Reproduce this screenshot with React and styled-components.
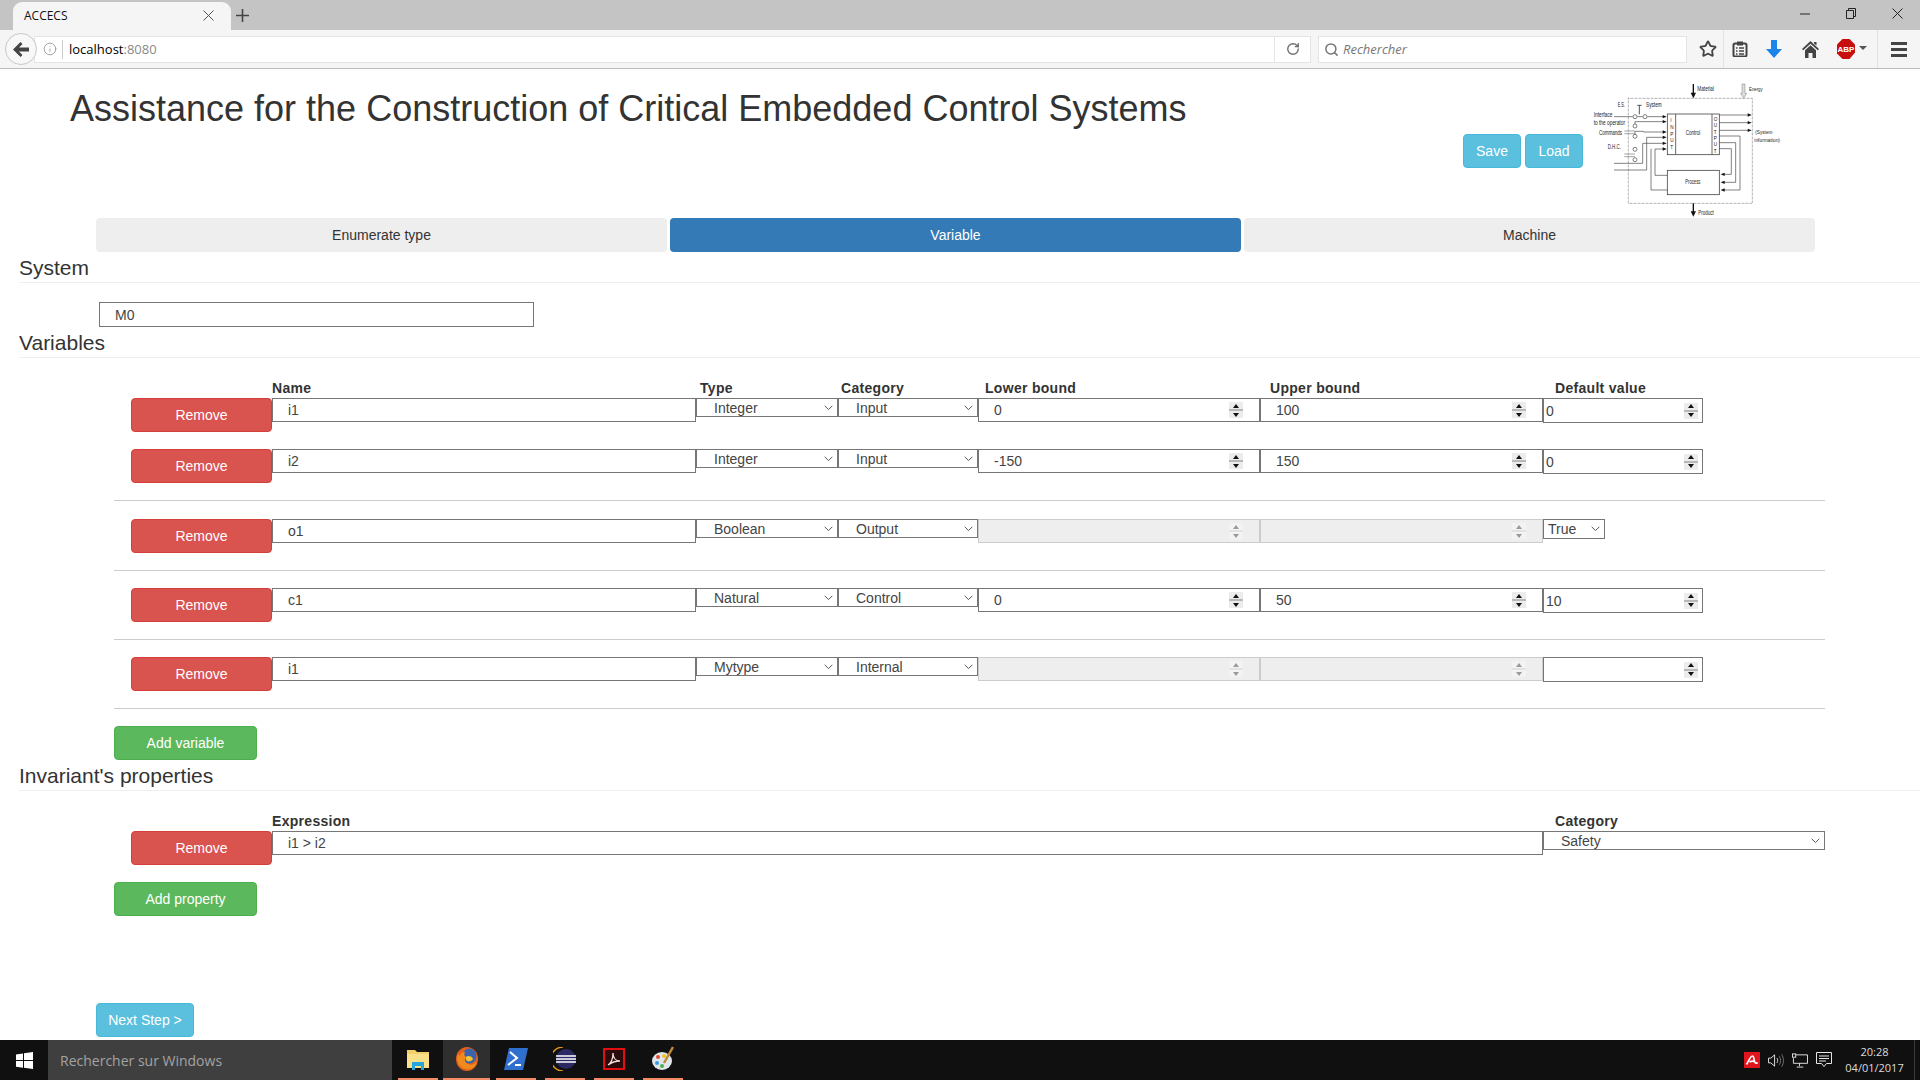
import React from 'react';
import styled, { createGlobalStyle } from 'styled-components';
import { Star, Info, RotateCw, Search } from 'lucide-react';

const GlobalStyle = createGlobalStyle`
  html, body {
    margin: 0;
    height: 100%;
    background: #fff;
  }
  body {
    font-family: "Liberation Sans", Arial, sans-serif;
    font-size: 14px;
    color: #333;
  }
  * {
    box-sizing: border-box;
  }
`;

const Screen = styled.div`
  display: grid;
  grid-template-rows: 69px 971px 40px;
  width: 1920px;
  height: 1080px;
  overflow: hidden;
`;

/* browser chrome */
const BrowserChrome = styled.header`
  font-family: "Open Sans", "Noto Sans", sans-serif;
  border-bottom: 1px solid #bcbcbc;
  background: #f5f5f5;
`;

const TabStrip = styled.div`
  display: flex;
  align-items: flex-end;
  height: 30px;
  background: #c4c4c4;
`;

const BrowserTab = styled.div`
  display: flex;
  align-items: center;
  justify-content: space-between;
  width: 218px;
  height: 28px;
  margin-left: 13px;
  padding: 0 17px 2px 11px;
  border-radius: 9px 9px 0 0;
  background: #f5f5f5;
  font-size: 12px;
  color: #111;
`;

const NewTab = styled.div`
  display: flex;
  align-items: center;
  justify-content: center;
  width: 22px;
  height: 28px;
  padding-bottom: 2px;
`;

const WindowControls = styled.div`
  display: flex;
  align-self: stretch;
  margin-left: auto;
`;

const WindowButton = styled.div`
  display: flex;
  align-items: center;
  justify-content: center;
  width: 46px;
  padding-bottom: 3px;
`;

const Toolbar = styled.div`
  display: flex;
  align-items: center;
  height: 38px;
`;

const BackButton = styled.div`
  display: flex;
  align-items: center;
  justify-content: center;
  flex: none;
  width: 32px;
  height: 32px;
  margin-left: 5px;
  border: 1px solid #c8c8c8;
  border-radius: 50%;
  background: #f8f8f8;
  position: relative;
  z-index: 1;
`;

const UrlBar = styled.div`
  display: flex;
  align-items: center;
  width: 1277px;
  height: 27px;
  margin-left: -3px;
  padding-left: 3px;
  border: 1px solid #e4e4e4;
  background: #fff;
  font-size: 13px;
  color: #000;

  span {
    color: #8a8a8a;
  }
`;

const UrlInfo = styled.div`
  display: flex;
  align-items: center;
  height: 19px;
  margin-right: 6px;
  padding: 0 5px;
  border-right: 1px solid #ccc;
  color: #8a8a8a;
`;

const UrlReload = styled.div`
  display: flex;
  align-items: center;
  justify-content: center;
  width: 36px;
  height: 100%;
  margin-left: auto;
  border-left: 1px solid #e4e4e4;
  color: #6f6f6f;
`;

const SearchBar = styled.div`
  display: flex;
  align-items: center;
  gap: 4px;
  width: 369px;
  height: 27px;
  margin-left: 7px;
  padding-left: 5px;
  border: 1px solid #e4e4e4;
  background: #fff;
  font-size: 13px;
  font-style: italic;
  color: #777;
`;

const ToolSlot = styled.div`
  display: flex;
  align-items: center;
  justify-content: center;
  flex: none;
  width: ${({ $w }) => $w}px;
  height: ${({ $divider }) => ($divider ? '38px' : 'auto')};
  padding-left: ${({ $shift }) => $shift || 0}px;
  border-left: ${({ $divider }) => ($divider ? '1px solid #e2e2e2' : '0')};
  color: #444;
`;

/* page */
const Main = styled.main`
  display: flex;
  flex-direction: column;
`;

const PageHeader = styled.div`
  display: flex;
  align-items: flex-start;
  height: 149px;
  padding-right: 133px;
`;

const Title = styled.h1`
  margin: 20px 0 0 70px;
  font-size: 36px;
  font-weight: 400;
  line-height: 40px;
  color: #333;
`;

const Actions = styled.div`
  display: flex;
  gap: 4px;
  margin: 65px 7px 0 auto;
`;

const DiagramWrap = styled.div`
  flex: none;
  width: 197px;
  height: 136px;
  margin-top: 13px;
`;

const Button = styled.button`
  display: block;
  width: ${({ $w }) => $w}px;
  height: 34px;
  padding: 0;
  border: 1px solid ${({ $kind }) => ({ info: '#46b8da', danger: '#d43f3a', success: '#4cae4c' }[$kind])};
  border-radius: 4px;
  background: ${({ $kind }) => ({ info: '#5bc0de', danger: '#d9534f', success: '#5cb85c' }[$kind])};
  color: #fff;
  font: 14px "Liberation Sans", Arial, sans-serif;
`;

const StepTabs = styled.nav`
  display: grid;
  grid-template-columns: repeat(3, 571px);
  gap: 3px;
  margin-left: 96px;
`;

const StepTab = styled.div`
  display: flex;
  align-items: center;
  justify-content: center;
  height: 34px;
  border-radius: 4px;
  background: ${({ $active }) => ($active ? '#337ab7' : '#eee')};
  color: ${({ $active }) => ($active ? '#fff' : '#333')};
`;

const SectionTitle = styled.h3`
  margin: 0 0 0 19px;
  padding-top: 4px;
  height: 31px;
  border-bottom: 1px solid #eee;
  font-size: 21px;
  font-weight: 400;
  line-height: 24px;
  color: #333;
`;

const Field = styled.div`
  display: flex;
  align-items: center;
  justify-content: space-between;
  width: ${({ $w }) => ($w ? `${$w}px` : 'auto')};
  height: ${({ $h }) => $h || 24}px;
  padding-left: ${({ $pad }) => $pad ?? 15}px;
  padding-right: ${({ $right }) => $right ?? 16}px;
  border: 1px solid ${({ $disabled }) => ($disabled ? '#ccc' : '#767676')};
  background: ${({ $disabled }) => ($disabled ? '#eee' : '#fff')};
  color: #444;
`;

const SystemField = styled(Field)`
  margin: 19px 0 0 99px;
  height: 25px;
`;

const FormBlock = styled.div`
  margin-left: 114px;
  width: 1711px;
`;

const HeaderRow = styled.div`
  display: grid;
  grid-template-columns: ${({ $cols }) => $cols};
  height: 20px;
  margin-top: 20px;
  padding-left: 158px;
  font-weight: 700;
  letter-spacing: 0.3px;
  line-height: 20px;
  color: #333;
`;

const RowGroup = styled.div`
  display: flex;
  flex-direction: column;
  gap: 17px;
  padding: ${({ $top }) => $top}px 0 17px;
  border-bottom: 1px solid #ccc;
`;

const Row = styled.div`
  display: grid;
  grid-template-columns: ${({ $cols }) => $cols};
  align-items: start;
  padding-left: 17px;
`;

const SelectBox = styled.div`
  display: flex;
  align-items: center;
  justify-content: space-between;
  width: ${({ $w }) => ($w ? `${$w}px` : 'auto')};
  height: ${({ $h }) => $h || 19}px;
  padding: 0 4px 0 ${({ $pad }) => $pad ?? 17}px;
  border: 1px solid #767676;
  background: #fff;
  color: #444;
  line-height: 14px;
`;

const SpinBox = styled.div`
  display: flex;
  flex-direction: column;
  justify-content: space-between;
  flex: none;
  width: 14px;
  height: 16px;
  background: ${({ $off }) => ($off ? '#e2e2e2' : '#b8b8b8')};
`;

const SpinPart = styled.div`
  display: flex;
  align-items: center;
  justify-content: center;
  height: 7px;
  background: ${({ $off }) => ($off ? '#f3f3f3' : '#ececec')};

  &::after {
    content: '';
    border-left: 3px solid transparent;
    border-right: 3px solid transparent;
    border-${({ $down }) => ($down ? 'top' : 'bottom')}: 4px solid ${({ $off }) => ($off ? '#9a9a9a' : '#111')};
  }
`;

const AddBlock = styled.div`
  margin-top: ${({ $top }) => $top}px;
`;

const NextStep = styled.div`
  margin: 87px 0 0 96px;
`;

/* taskbar */
const Taskbar = styled.footer`
  display: flex;
  align-items: stretch;
  background: #101010;
  font-family: "Open Sans", "Noto Sans", sans-serif;
`;

const StartButton = styled.div`
  display: flex;
  align-items: center;
  justify-content: center;
  width: 48px;
`;

const TaskSearch = styled.div`
  display: flex;
  align-items: center;
  width: 344px;
  padding-left: 12px;
  background: #3f3f3f;
  color: #a3a3a3;
  font-size: 14px;
`;

const TaskList = styled.div`
  display: flex;
  gap: 9px;
  padding-left: 6px;
`;

const TaskSlot = styled.div`
  display: flex;
  align-items: center;
  justify-content: center;
  width: ${({ $active }) => ($active ? 47 : 40)}px;
  margin: ${({ $active }) => ($active ? '0 -3px 0 -4px' : 0)};
  border-bottom: 2px solid #f58b66;
  background: ${({ $active }) => ($active ? '#2f2f2f' : 'transparent')};
`;

const Tray = styled.div`
  display: flex;
  align-items: center;
  gap: 8px;
  margin-left: auto;
  padding-right: 5px;
`;

const TrayIcon = styled.div`
  display: flex;
  justify-content: center;
  width: 16px;
`;

const Clock = styled.div`
  display: flex;
  flex-direction: column;
  justify-content: center;
  width: 80px;
  height: 40px;
  margin-left: -5px;
  border-right: 1px solid #3a3a3a;
  color: #ddd;
  font-size: 11px;
  line-height: 16px;
  text-align: center;
`;

const Spinner = ({ off }) => (
  <SpinBox $off={off}>
    <SpinPart $off={off} />
    <SpinPart $off={off} $down />
  </SpinBox>
);

const Chevron = () => (
  <svg width="9" height="6" viewBox="0 0 9 6" fill="none" stroke="#555" strokeWidth="1">
    <path d="M.7.8l3.8 3.8L8.3.8" />
  </svg>
);

const Select = ({ value, ...rest }) => (
  <SelectBox {...rest}>
    <span>{value}</span>
    <Chevron />
  </SelectBox>
);

const Arrow = ({ d, head }) => (
  <>
    <path d={d} fill="none" stroke="#444" strokeWidth="2" />
    <path d={head} fill="#111" />
  </>
);

const rightHead = (x, y) => `M${x} ${y}l-12 -5v10z`;
const leftHead = (x, y) => `M${x} ${y}l12 -5v10z`;

const DiagramLabel = ({ x, y, w, children, size = 21 }) => (
  <text
    x={x}
    y={y + 1}
    textLength={w}
    lengthAdjust="spacingAndGlyphs"
    fontSize={size}
    fontFamily="Liberation Sans, sans-serif"
    fill="#222">
    {children}
  </text>
);

const Diagram = () => (
  <svg width="197" height="136" viewBox="90 36 591 408">
    <rect x="205" y="85" width="372" height="315" fill="none" stroke="#555" strokeWidth="2" strokeDasharray="2 2" />
    <path d="M400 42v30" stroke="#111" strokeWidth="4" />
    <path d="M392 68h16l-8 17z" fill="#111" />
    <DiagramLabel x={412} y={62} w={50}>Material</DiagramLabel>
    <path d="M546 42h9v28h5l-9 15-9-15h4z" fill="#ddd" stroke="#777" strokeWidth="1.4" />
    <DiagramLabel x={567} y={63} w={41} size={18}>Energy</DiagramLabel>
    <DiagramLabel x={173} y={111} w={22}>E.S.</DiagramLabel>
    <DiagramLabel x={258} y={110} w={47}>System</DiagramLabel>
    <DiagramLabel x={101} y={139} w={56}>Interface</DiagramLabel>
    <DiagramLabel x={101} y={164} w={94}>to the operator</DiagramLabel>
    <DiagramLabel x={117} y={194} w={69}>Commands</DiagramLabel>
    <DiagramLabel x={143} y={235} w={40}>D.H.C.</DiagramLabel>

    <rect x="322" y="132" width="156" height="122" fill="#fff" stroke="#444" strokeWidth="2.4" />
    <path d="M347 132v122M456 132v122" stroke="#444" strokeWidth="2.4" />
    <DiagramLabel x={377} y={195} w={44}>Control</DiagramLabel>
    {['I', 'N', 'P', 'U', 'T'].map((c, i) => (
      <DiagramLabel key={`in${i}`} x={331} y={156 + i * 20} size={14}>{c}</DiagramLabel>
    ))}
    {['O', 'U', 'T', 'P', 'U', 'T'].map((c, i) => (
      <DiagramLabel key={`out${i}`} x={461} y={152 + i * 19} size={14}>{c}</DiagramLabel>
    ))}
    <rect x="322" y="301" width="156" height="73" fill="#fff" stroke="#444" strokeWidth="2.4" />
    <DiagramLabel x={376} y={342} w={45}>Process</DiagramLabel>

    <path d="M238 105v28M232 106h13" stroke="#555" strokeWidth="3" fill="none" />
    <path d="M193 183h32M193 191h32M193 252h32M193 260h32" stroke="#777" strokeWidth="2" />
    <path d="M162 140h56M232 140h16" stroke="#444" strokeWidth="2" />
    {[[225, 140], [255, 140], [225, 168], [225, 199], [225, 238], [225, 269]].map(([cx, cy]) => (
      <circle key={`${cx}-${cy}`} cx={cx} cy={cy} r="6" fill="#fff" stroke="#444" strokeWidth="2" />
    ))}

    <Arrow d="M262 140h48" head={rightHead(320, 140)} />
    <Arrow d="M225 162v-7h85" head={rightHead(320, 155)} />
    <Arrow d="M225 193v-9h25v2h60" head={rightHead(320, 186)} />
    <Arrow d="M162 300h98v-98h50" head={rightHead(320, 202)} />
    <Arrow d="M162 280h86v-60h62" head={rightHead(320, 220)} />
    <Arrow d="M322 316h-37v-79h25" head={rightHead(320, 237)} />
    <path d="M322 360h-49v-124" fill="none" stroke="#444" strokeWidth="2" />

    <Arrow d="M478 135h87" head={rightHead(575, 135)} />
    <Arrow d="M478 158h87" head={rightHead(575, 158)} />
    <Arrow d="M478 181h87" head={rightHead(575, 181)} />
    <DiagramLabel x={586} y={191} w={51} size={18}>(System</DiagramLabel>
    <DiagramLabel x={583} y={216} w={77} size={18}>information)</DiagramLabel>

    <Arrow d="M478 198h62v162h-48" head={leftHead(482, 360)} />
    <Arrow d="M478 218h49v119h-35" head={leftHead(482, 337)} />
    <Arrow d="M478 236h36v77h-22" head={leftHead(482, 313)} />

    <path d="M400 400v28" stroke="#111" strokeWidth="4" />
    <path d="M392 424h16l-8 16z" fill="#111" />
    <DiagramLabel x={415} y={434} w={46}>Product</DiagramLabel>
  </svg>
);

const ClipboardIcon = () => (
  <svg width="16" height="16" viewBox="0 0 16 16">
    <rect x="1.5" y="2.5" width="13" height="13" rx="1.5" fill="none" stroke="#444" strokeWidth="2" />
    <rect x="5" y="0.5" width="6" height="4" fill="#444" />
    <path d="M4 7h1.5M7 7h5M4 10h1.5M7 10h5M4 13h1.5M7 13h5" stroke="#444" strokeWidth="1.5" />
  </svg>
);

const DownloadIcon = () => (
  <svg width="16" height="18" viewBox="0 0 16 18">
    <path d="M5 0h6v9h5l-8 9-8-9h5z" fill="#1a84e8" />
  </svg>
);

const HomeIcon = () => (
  <svg width="17" height="17" viewBox="0 0 17 17" fill="#444">
    <path d="M8.500 0L17 8l-1.200 1.300L8.500 2.700 1.200 9.300 0 8z" />
    <path d="M8.500 4.200l5.500 5V17h-3.500v-5h-4v5H3V9.200z" />
    <path d="M12 1h2.500v3.500L12 2.500z" />
  </svg>
);

const AbpIcon = () => (
  <svg width="31" height="20" viewBox="0 0 31 20">
    <path d="M5.5 0h7.000L18 5.500v8L12.500 20h-7L0 14.500v-9z" fill="#c70d0d" />
    <text x="9" y="13" textAnchor="middle" fontSize="8" fontWeight="700" fill="#fff" fontFamily="Liberation Sans, sans-serif">ABP</text>
    <path d="M22 7h8l-4 4z" fill="#555" />
  </svg>
);

const MenuIcon = () => (
  <svg width="16" height="15" viewBox="0 0 16 15">
    <path d="M0 1.500h16M0 7.500h16M0 13.500h16" stroke="#444" strokeWidth="3" />
  </svg>
);

const WindowsLogo = () => (
  <svg width="17" height="17" viewBox="0 0 17 17" fill="#fff">
    <path d="M0 2.400l7-1v6.700H0zM8 1.300L17 0v8.100H8zM0 9h7v6.700l-7-1zM8 9h9v8l-9-1.300z" />
  </svg>
);

const ExplorerIcon = () => (
  <svg width="22" height="22" viewBox="0 0 22 22">
    <path d="M0 2h8l2 2h12v16H0z" fill="#f2cf69" />
    <path d="M0 6h22v14H0z" fill="#fbe08a" />
    <path d="M5 14h12v8h-3v-4H8v4H5z" fill="#26a5dc" />
  </svg>
);

const FirefoxIcon = () => (
  <svg width="22" height="24" viewBox="0 0 22 24">
    <ellipse cx="11" cy="12" rx="11" ry="12" fill="#e2601a" />
    <ellipse cx="13.500" cy="9" rx="7" ry="7.500" fill="#3c62ae" />
    <path d="M2 6c-2 6 0 14 7 16 6 1.500 11-2 12-8-2 3-6 5-9 3-3-1-4-5-2-7-2-1-2-3-1-5C6 5 4 7 4 9 3 8 2 7 2 6z" fill="#f08a1d" />
    <path d="M10 10c2-2 6-1 7 2-1 2-4 3-6 2-1-1-2-3-1-4z" fill="#f8c32c" />
  </svg>
);

const PowerShellIcon = () => (
  <svg width="24" height="22" viewBox="0 0 24 22">
    <path d="M5 0h19l-5 22H0z" fill="#2f6fce" />
    <path d="M6 4l7 6-9 7" fill="none" stroke="#fff" strokeWidth="2" />
    <path d="M11 17h6" stroke="#fff" strokeWidth="2" />
  </svg>
);

const EclipseIcon = () => (
  <svg width="24" height="24" viewBox="0 0 24 24">
    <path d="M10 0a12 12 0 0 0 0 24" fill="none" stroke="#e8951f" strokeWidth="1.500" />
    <circle cx="13" cy="12" r="10" fill="#2c2a64" />
    <path d="M3 9h20M3 12h20M3 15h20" stroke="#fff" strokeWidth="1.500" />
  </svg>
);

const AcrobatIcon = () => (
  <svg width="22" height="22" viewBox="0 0 22 22">
    <rect x="1" y="1" width="20" height="20" fill="#2a0a0a" stroke="#e01010" strokeWidth="2" />
    <path d="M5 17c3-2 5-7 5-12 0 5 3 8 7 8-4 0-8 1-12 4z" fill="none" stroke="#f0dede" strokeWidth="1.300" />
  </svg>
);

const PaletteIcon = () => (
  <svg width="24" height="26" viewBox="0 0 24 26">
    <ellipse cx="11" cy="15" rx="10" ry="9" fill="#dfe7ec" />
    <circle cx="7" cy="11" r="2" fill="#e04a3a" />
    <circle cx="13" cy="10" r="2" fill="#f0c419" />
    <circle cx="6" cy="17" r="2" fill="#3a9be0" />
    <circle cx="11" cy="20" r="2" fill="#4bb04b" />
    <path d="M13 17L22 1" stroke="#c08a3c" strokeWidth="2.500" />
  </svg>
);

const AviraIcon = () => (
  <svg width="16" height="16" viewBox="0 0 16 16">
    <rect width="16" height="16" fill="#e2141d" />
    <path d="M2.500 12.500C5 8 6.500 4 8.500 4c1.800 0 1 4.500 2.500 6.500.8 1 2 .8 2.500-.2M5.500 10c2-1 4.500-1 6 .5" fill="none" stroke="#fff" strokeWidth="1.700" />
  </svg>
);

const SpeakerIcon = () => (
  <svg width="17" height="15" viewBox="0 0 17 15" fill="none" stroke="#e6e6e6">
    <path d="M.5 5h2.500L7 1.500v12L3 10H.5z" />
    <path d="M9.500 5c1 1.500 1 3.500 0 5" />
    <path d="M12 3c1.800 2.500 1.800 6.500 0 9M14.500 1c2.500 3.500 2.500 9.500 0 13" stroke="#777" />
  </svg>
);

const NetworkIcon = () => (
  <svg width="17" height="15" viewBox="0 0 17 15" fill="none" stroke="#e6e6e6">
    <path d="M4 1.500h12.500v9H1.500V5" />
    <path d="M8 10.500v3M5 14.500h7" />
    <rect x=".5" y=".5" width="3.500" height="3.500" />
  </svg>
);

const NotifyIcon = () => (
  <svg width="16" height="16" viewBox="0 0 16 16" fill="none" stroke="#e6e6e6">
    <path d="M.5.500h15v11h-5l-2.500 3-2.500-3h-5z" />
    <path d="M3 4h10M3 6.500h10M3 9h7" />
  </svg>
);

const variableColumns = '141px 424px 142px 140px 282px 283px 160px';
const labelColumns = '428px 141px 144px 285px 285px auto';

const variableGroups = [
  {
    top: 0,
    rows: [
      { name: 'i1', type: 'Integer', category: 'Input', lower: '0', upper: '100', value: '0' },
      { name: 'i2', type: 'Integer', category: 'Input', lower: '-150', upper: '150', value: '0' },
    ],
  },
  { top: 18, rows: [{ name: 'o1', type: 'Boolean', category: 'Output', off: true, choice: 'True' }] },
  { top: 17, rows: [{ name: 'c1', type: 'Natural', category: 'Control', lower: '0', upper: '50', value: '10' }] },
  { top: 17, rows: [{ name: 'i1', type: 'Mytype', category: 'Internal', off: true, value: '' }] },
];

const BoundField = ({ value, off }) => (
  <Field $disabled={off}>
    <span>{value}</span>
    <Spinner off={off} />
  </Field>
);

const VariableRow = ({ row }) => (
  <Row $cols={variableColumns}>
    <Button $kind="danger" $w={141}>Remove</Button>
    <Field>{row.name}</Field>
    <Select value={row.type} />
    <Select value={row.category} />
    <BoundField value={row.lower} off={row.off} />
    <BoundField value={row.upper} off={row.off} />
    {row.choice ? (
      <Select value={row.choice} $w={62} $h={20} $pad={4} />
    ) : (
      <Field $h={25} $pad={2} $right={4}>
        <span>{row.value}</span>
        <Spinner />
      </Field>
    )}
  </Row>
);

const App = () => (
  <Screen>
    <GlobalStyle />
    <BrowserChrome>
      <TabStrip>
        <BrowserTab>
          ACCECS
          <svg width="11" height="11" viewBox="0 0 11 11" stroke="#555" strokeWidth="1">
            <path d="M.5.5l10 10M10.500.5l-10 10" />
          </svg>
        </BrowserTab>
        <NewTab>
          <svg width="13" height="13" viewBox="0 0 13 13" stroke="#444" strokeWidth="1.600">
            <path d="M6.500 0v13M0 6.500h13" />
          </svg>
        </NewTab>
        <WindowControls>
          <WindowButton>
            <svg width="10" height="2" viewBox="0 0 10 2" stroke="#222"><path d="M0 1h10" /></svg>
          </WindowButton>
          <WindowButton>
            <svg width="10" height="11" viewBox="0 0 10 11" fill="none" stroke="#222">
              <path d="M.5 2.500h7v8h-7zM2.500 2.500v-2h7v8h-2" />
            </svg>
          </WindowButton>
          <WindowButton>
            <svg width="11" height="11" viewBox="0 0 11 11" stroke="#222">
              <path d="M.5.5l10 10M10.500.5l-10 10" />
            </svg>
          </WindowButton>
        </WindowControls>
      </TabStrip>
      <Toolbar>
        <BackButton>
          <svg width="16" height="15" viewBox="0 0 16 15" fill="#444">
            <path d="M7.500 0l2 2-3.500 3.500h10v4H6L9.500 13l-2 2L0 7.500z" />
          </svg>
        </BackButton>
        <UrlBar>
          <UrlInfo><Info size={14} strokeWidth={1.3} /></UrlInfo>
          localhost<span>:8080</span>
          <UrlReload><RotateCw size={14} strokeWidth={2.4} /></UrlReload>
        </UrlBar>
        <SearchBar>
          <Search size={15} color="#777" strokeWidth={2.4} />
          Rechercher
        </SearchBar>
        <ToolSlot $w={36} $shift={6}><Star size={18} strokeWidth={2.4} /></ToolSlot>
        <ToolSlot $w={33} $divider><ClipboardIcon /></ToolSlot>
        <ToolSlot $w={36}><DownloadIcon /></ToolSlot>
        <ToolSlot $w={36}><HomeIcon /></ToolSlot>
        <ToolSlot $w={49}><AbpIcon /></ToolSlot>
        <ToolSlot $w={42} $divider><MenuIcon /></ToolSlot>
      </Toolbar>
    </BrowserChrome>

    <Main>
      <PageHeader>
        <Title>Assistance for the Construction of Critical Embedded Control Systems</Title>
        <Actions>
          <Button $kind="info" $w={58}>Save</Button>
          <Button $kind="info" $w={58}>Load</Button>
        </Actions>
        <DiagramWrap><Diagram /></DiagramWrap>
      </PageHeader>

      <StepTabs>
        <StepTab>Enumerate type</StepTab>
        <StepTab $active>Variable</StepTab>
        <StepTab>Machine</StepTab>
      </StepTabs>

      <SectionTitle>System</SectionTitle>
      <SystemField $w={435}>M0</SystemField>

      <SectionTitle>Variables</SectionTitle>
      <FormBlock>
        <HeaderRow $cols={labelColumns}>
          <span>Name</span>
          <span>Type</span>
          <span>Category</span>
          <span>Lower bound</span>
          <span>Upper bound</span>
          <span>Default value</span>
        </HeaderRow>
        {variableGroups.map((group, i) => (
          <RowGroup key={i} $top={group.top}>
            {group.rows.map((row, j) => (
              <VariableRow key={j} row={row} />
            ))}
          </RowGroup>
        ))}
        <AddBlock $top={17}><Button $kind="success" $w={143}>Add variable</Button></AddBlock>
      </FormBlock>

      <SectionTitle>Invariant's properties</SectionTitle>
      <FormBlock>
        <HeaderRow $cols="1283px auto">
          <span>Expression</span>
          <span>Category</span>
        </HeaderRow>
        <Row $cols="141px 1271px 282px">
          <Button $kind="danger" $w={141}>Remove</Button>
          <Field>i1 &gt; i2</Field>
          <Select value="Safety" />
        </Row>
        <AddBlock $top={17}><Button $kind="success" $w={143}>Add property</Button></AddBlock>
      </FormBlock>

      <NextStep><Button $kind="info" $w={98}>Next Step &gt;</Button></NextStep>
    </Main>

    <Taskbar>
      <StartButton><WindowsLogo /></StartButton>
      <TaskSearch>Rechercher sur Windows</TaskSearch>
      <TaskList>
        <TaskSlot><ExplorerIcon /></TaskSlot>
        <TaskSlot $active><FirefoxIcon /></TaskSlot>
        <TaskSlot><PowerShellIcon /></TaskSlot>
        <TaskSlot><EclipseIcon /></TaskSlot>
        <TaskSlot><AcrobatIcon /></TaskSlot>
        <TaskSlot><PaletteIcon /></TaskSlot>
      </TaskList>
      <Tray>
        <TrayIcon><AviraIcon /></TrayIcon>
        <TrayIcon><SpeakerIcon /></TrayIcon>
        <TrayIcon><NetworkIcon /></TrayIcon>
        <TrayIcon><NotifyIcon /></TrayIcon>
        <Clock>
          <span>20:28</span>
          <span>04/01/2017</span>
        </Clock>
      </Tray>
    </Taskbar>
  </Screen>
);

export default App;
